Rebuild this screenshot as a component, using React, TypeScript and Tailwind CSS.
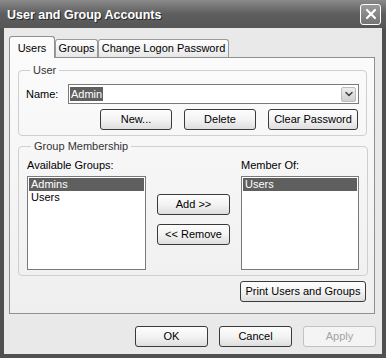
import { ChevronDown, X } from 'lucide-react';

const font = "font-['Liberation_Sans',Arial,sans-serif]";

function Btn({ label, w, disabled }: { label: string; w: string; disabled?: boolean }) {
  return (
    <button
      className={`${w} h-[21px] rounded-[3px] border text-[11px] leading-none ${
        disabled
          ? 'border-[#c2c2c2] bg-[#f4f4f4] text-[#a3a3a3]'
          : 'border-[#3a3a3a] bg-gradient-to-b from-[#fdfdfd] via-[#f3f3f3] to-[#dedede] text-black'
      }`}
    >
      {label}
    </button>
  );
}

function ListBox({ items, selected }: { items: string[]; selected: string }) {
  return (
    <div className="h-[94px] border border-[#7a7a7a] bg-white p-px">
      {items.map((it) => (
        <div
          key={it}
          className={`h-[13px] pl-[2px] text-[11px] leading-[13px] ${
            it === selected ? 'bg-[#5f5f5f] text-white' : 'text-black'
          }`}
        >
          {it}
        </div>
      ))}
    </div>
  );
}

export default function App() {
  return (
    <div className={`${font} flex h-[358px] w-[386px] flex-col bg-[#505050]`}>
      {/* title bar */}
      <div className="flex h-[28px] items-center justify-between bg-gradient-to-b from-[#8a8a8a] via-[#5e5e5e] to-[#565656] pl-[7px] pr-[5px]">
        <span className="pt-[2px] text-[12.5px] font-bold text-white [text-shadow:1px_1px_0_#2a2a2a]">
          User and Group Accounts
        </span>
        <div className="flex h-[21px] w-[21px] items-center justify-center rounded-[3px] border border-white bg-gradient-to-b from-[#9a9a9a] to-[#747474]">
          <X size={16} strokeWidth={3.2} className="text-white" />
        </div>
      </div>

      {/* client area */}
      <div className="mx-[4px] mb-[4px] flex flex-1 flex-col bg-[#e9e9e9] pl-[5px] pr-[6px] pt-[8px] text-[11px] text-black">
        {/* tabs */}
        <div className="flex h-[21px] items-end">
          <div className="relative z-10 -mb-px flex h-[22px] w-[46px] items-start justify-center rounded-t-[3px] border border-b-0 border-[#8f8f8f] bg-[#fbfbfb] pt-[3px]">
            Users
          </div>
          <div className="flex h-[18px] w-[43px] items-center justify-center rounded-t-[3px] border border-b-0 border-[#9a9a9a] bg-gradient-to-b from-white to-[#e7e7e7]">
            Groups
          </div>
          <div className="flex h-[18px] w-[131px] items-center justify-center rounded-t-[3px] border border-b-0 border-[#9a9a9a] bg-gradient-to-b from-white to-[#e7e7e7]">
            Change Logon Password
          </div>
        </div>

        {/* tab panel */}
        <div className="mr-px flex h-[257px] flex-col border border-[#8f8f8f] bg-gradient-to-b from-[#fbfbfb] to-[#efefef]">
          <fieldset className="ml-[8px] mr-[7px] mt-[6px] rounded-[4px] border border-[#cfcfcf] px-[7px] pb-[5px] pt-[7px]">
            <legend className="ml-[4px] px-[3px] leading-[13px] text-[#333]">User</legend>
            <div className="flex h-[20px] items-center">
              <span className="w-[42px]">Name:</span>
              <div className="flex h-[20px] flex-1 items-center border border-[#7a7a7a] bg-white pl-px pr-[2px]">
                <span className="h-[14px] bg-[#5f5f5f] px-px leading-[14px] text-white">Admin</span>
                <div className="flex-1" />
                <div className="flex h-[15px] w-[15px] items-center justify-center rounded-[2px] border border-[#bdbdbd] bg-gradient-to-b from-[#eeeeee] to-[#cfcfcf]">
                  <ChevronDown size={12} strokeWidth={3} className="text-[#404040]" />
                </div>
              </div>
            </div>
            <div className="mt-[5px] flex justify-end gap-[12px] pr-px">
              <Btn label="New..." w="w-[72px]" />
              <Btn label="Delete" w="w-[72px]" />
              <Btn label="Clear Password" w="w-[90px]" />
            </div>
          </fieldset>

          <fieldset className="ml-[8px] mr-[7px] mt-[4px] rounded-[4px] border border-[#cfcfcf] px-[8px] pb-[5px] pt-[6px]">
            <legend className="ml-[4px] px-[3px] leading-[13px] text-[#333]">Group Membership</legend>
            <div className="grid grid-cols-[119px_73px_118px] gap-x-[11px]">
              <div className="flex flex-col gap-[4px]">
                <span className="leading-[13px]">Available Groups:</span>
                <ListBox items={['Admins', 'Users']} selected="Admins" />
              </div>
              <div className="flex flex-col gap-[9px] pt-[35px]">
                <Btn label="Add >>" w="w-[73px]" />
                <Btn label="<< Remove" w="w-[73px]" />
              </div>
              <div className="flex flex-col gap-[4px]">
                <span className="leading-[13px]">Member Of:</span>
                <ListBox items={['Users']} selected="Users" />
              </div>
            </div>
          </fieldset>

          <div className="mr-[8px] mt-[5px] flex justify-end">
            <Btn label="Print Users and Groups" w="w-[126px]" />
          </div>
        </div>

        {/* dialog buttons */}
        <div className="mt-[12px] flex justify-end gap-[11px]">
          <Btn label="OK" w="w-[73px]" />
          <Btn label="Cancel" w="w-[73px]" />
          <Btn label="Apply" w="w-[73px]" disabled />
        </div>
      </div>
    </div>
  );
}
